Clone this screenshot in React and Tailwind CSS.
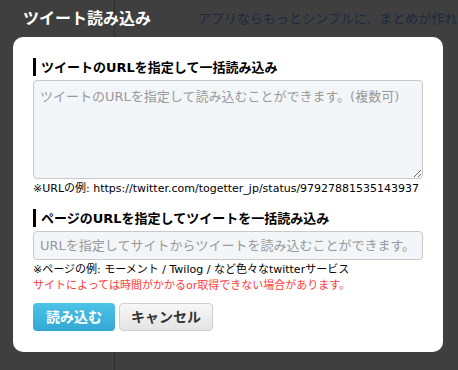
export default function App() {
  const font = { fontFamily: '"DejaVu Sans", "Noto Sans CJK JP", sans-serif' }

  return (
    <div className="relative h-[370px] w-[458px] overflow-hidden bg-[#3f3f3f]" style={font}>
      {/* page behind the overlay */}
      <div className="flex h-full">
        <div className="h-full w-[115px] border-r border-[#2f2f2f]" />
        <div className="flex-1" />
      </div>
      <div className="absolute left-0 top-0 flex h-[37px] w-full items-center overflow-hidden whitespace-nowrap">
        <div className="pl-[23px] text-[16px] font-bold text-white">ツイート読み込み</div>
        <div className="pl-[47px] text-[13px] text-[#1c2a40]">アプリならもっとシンプルに、まとめが作れ</div>
      </div>

      {/* modal */}
      <div className="absolute left-[13px] top-[37px] h-[315px] w-[430px] rounded-[10px] bg-white px-5 pt-[21px]">
        <h2 className="flex h-[18px] items-center border-l-[3px] border-black pl-[5px] text-[13px] font-bold leading-none text-black">
          ツイートのURLを指定して一括読み込み
        </h2>
        <textarea
          className="mt-[4px] block h-[99px] w-full resize-y rounded-[4px] border border-[#c8c8c8] bg-[#f3f6f9] px-[6px] py-[6px] text-[13px] text-gray-800 placeholder:text-[#999]"
          placeholder="ツイートのURLを指定して読み込むことができます。(複数可)"
        />
        <p className="mt-[3px] whitespace-nowrap text-[11px] leading-[14px] text-black">
          ※URLの例: https://twitter.com/togetter_jp/status/97927881535143937
        </p>

        <h2 className="mt-[13px] flex h-[18px] items-center border-l-[3px] border-black pl-[5px] text-[13px] font-bold leading-none text-black">
          ページのURLを指定してツイートを一括読み込み
        </h2>
        <input
          className="mt-[4px] block h-[29px] w-full rounded-[4px] border border-[#c8c8c8] bg-[#f3f6f9] px-[6px] text-[13px] text-gray-800 placeholder:text-[#999]"
          placeholder="URLを指定してサイトからツイートを読み込むことができます。"
        />
        <p className="mt-[2px] whitespace-nowrap text-[11px] leading-[16px] text-black">
          ※ページの例: モーメント / Twilog / など色々なtwitterサービス
        </p>
        <p className="whitespace-nowrap text-[11px] leading-[16px] text-[#ff3b3b]">
          サイトによっては時間がかかるor取得できない場合があります。
        </p>

        <div className="mt-[9px] flex gap-[4px]">
          <button className="h-[28px] w-[82px] rounded-[4px] bg-gradient-to-b from-[#4cc3e8] to-[#33a7d4] text-[14px] font-bold text-white">
            読み込む
          </button>
          <button className="h-[28px] w-[94px] rounded-[4px] border border-[#cfcfcf] bg-gradient-to-b from-[#f7f7f7] to-[#e4e4e4] text-[14px] font-bold text-[#333]">
            キャンセル
          </button>
        </div>
      </div>
    </div>
  )
}
